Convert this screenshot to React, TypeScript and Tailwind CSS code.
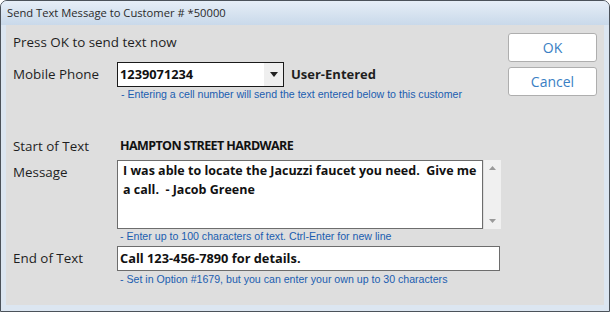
import React from "react";

const label = "w-[104px] shrink-0 text-[13.4px] text-[#1e1e1e]";
const hint = "text-[10.6px] text-[#1a5db0] font-['Liberation_Sans',Arial,sans-serif] leading-[12px]";
const field = "text-[12.8px] font-bold text-[#111]";

export default function App() {
  return (
    <div className="w-[610px] h-[312px] bg-white font-['Open_Sans','Noto_Sans',sans-serif]">
      <div className="w-[610px] h-[312px] flex flex-col border border-[#4b525a] rounded-t-[7px] bg-[#dce6f1] overflow-hidden">
        {/* Title bar */}
        <div className="h-[24px] shrink-0 flex items-center pl-[6px] text-[11.2px] text-[#2a2a2a] bg-gradient-to-b from-[#e6eef7] to-[#c9d9ea]">
          Send Text Message to Customer # *50000
        </div>

        {/* Client area */}
        <div className="flex-1 mx-[5px] mb-[6px] bg-[#dedede] flex">
          <div className="flex-1 pl-[7px] flex flex-col">
            <div className="h-[34px] flex items-center text-[13.4px] text-[#1e1e1e]">
              Press OK to send text now
            </div>

            <div className="flex items-center mt-[3px]">
              <div className={label}>Mobile Phone</div>
              <div className="w-[167px] h-[25px] border border-[#1a1a1a] bg-white flex">
                <div className={`flex-1 pl-[2px] flex items-center ${field}`}>1239071234</div>
                <div className="w-[19px] bg-[#efefef] flex items-center justify-center">
                  <svg width="8" height="5" viewBox="0 0 8 5">
                    <path d="M0 0 H8 L4 5 Z" fill="#222" />
                  </svg>
                </div>
              </div>
              <div className="ml-[7px] text-[13px] font-bold text-[#1e1e1e]">User-Entered</div>
            </div>
            <div className={`${hint} ml-[108px] mt-[1px]`}>
              - Entering a cell number will send the text entered below to this customer
            </div>

            <div className="flex items-center mt-[38px] h-[16px]">
              <div className={label}>Start of Text</div>
              <div className="ml-[3px] text-[12.5px] tracking-[-0.6px] font-bold text-[#111]">HAMPTON STREET HARDWARE</div>
            </div>

            <div className="flex mt-[6px]">
              <div className={`${label} pt-[2px]`}>Message</div>
              <div className="w-[366px] h-[69px] border border-[#6d6d6d] bg-white px-[5px] leading-[19px] text-[12.5px] font-bold text-[#111] whitespace-nowrap overflow-hidden">
                I was able to locate the Jacuzzi faucet you need.&nbsp; Give me
                <br />
                a call.&nbsp; - Jacob Greene
              </div>
              <div className="w-[17px] h-[69px] ml-[1px] bg-[#f0f0f0] flex flex-col justify-between items-center py-[6px]">
                <svg width="7" height="4" viewBox="0 0 7 4">
                  <path d="M0 4 L3.5 0 L7 4 Z" fill="#9a9a9a" />
                </svg>
                <svg width="7" height="4" viewBox="0 0 7 4">
                  <path d="M0 0 L3.5 4 L7 0 Z" fill="#9a9a9a" />
                </svg>
              </div>
            </div>
            <div className={`${hint} ml-[107px] mt-[1px]`}>
              - Enter up to 100 characters of text. Ctrl-Enter for new line
            </div>

            <div className="flex items-center mt-[4px]">
              <div className={label}>End of Text</div>
              <div className={`w-[383px] h-[25px] border border-[#6d6d6d] bg-white pl-[2px] flex items-center ${field}`}>
                Call 123-456-7890 for details.
              </div>
            </div>
            <div className={`${hint} ml-[107px] mt-[2px]`}>
              - Set in Option #1679, but you can enter your own up to 30 characters
            </div>
          </div>

          <div className="w-[100px] shrink-0 flex flex-col gap-[5px] pt-[8px] pl-[4px]">
            <button className="w-[89px] h-[29px] bg-white border border-[#aeaeae] rounded-[3px] text-[14px] text-[#3a80c4]">
              OK
            </button>
            <button className="w-[89px] h-[29px] bg-white border border-[#aeaeae] rounded-[3px] text-[14px] text-[#3a80c4]">
              Cancel
            </button>
          </div>
        </div>
      </div>
    </div>
  );
}
